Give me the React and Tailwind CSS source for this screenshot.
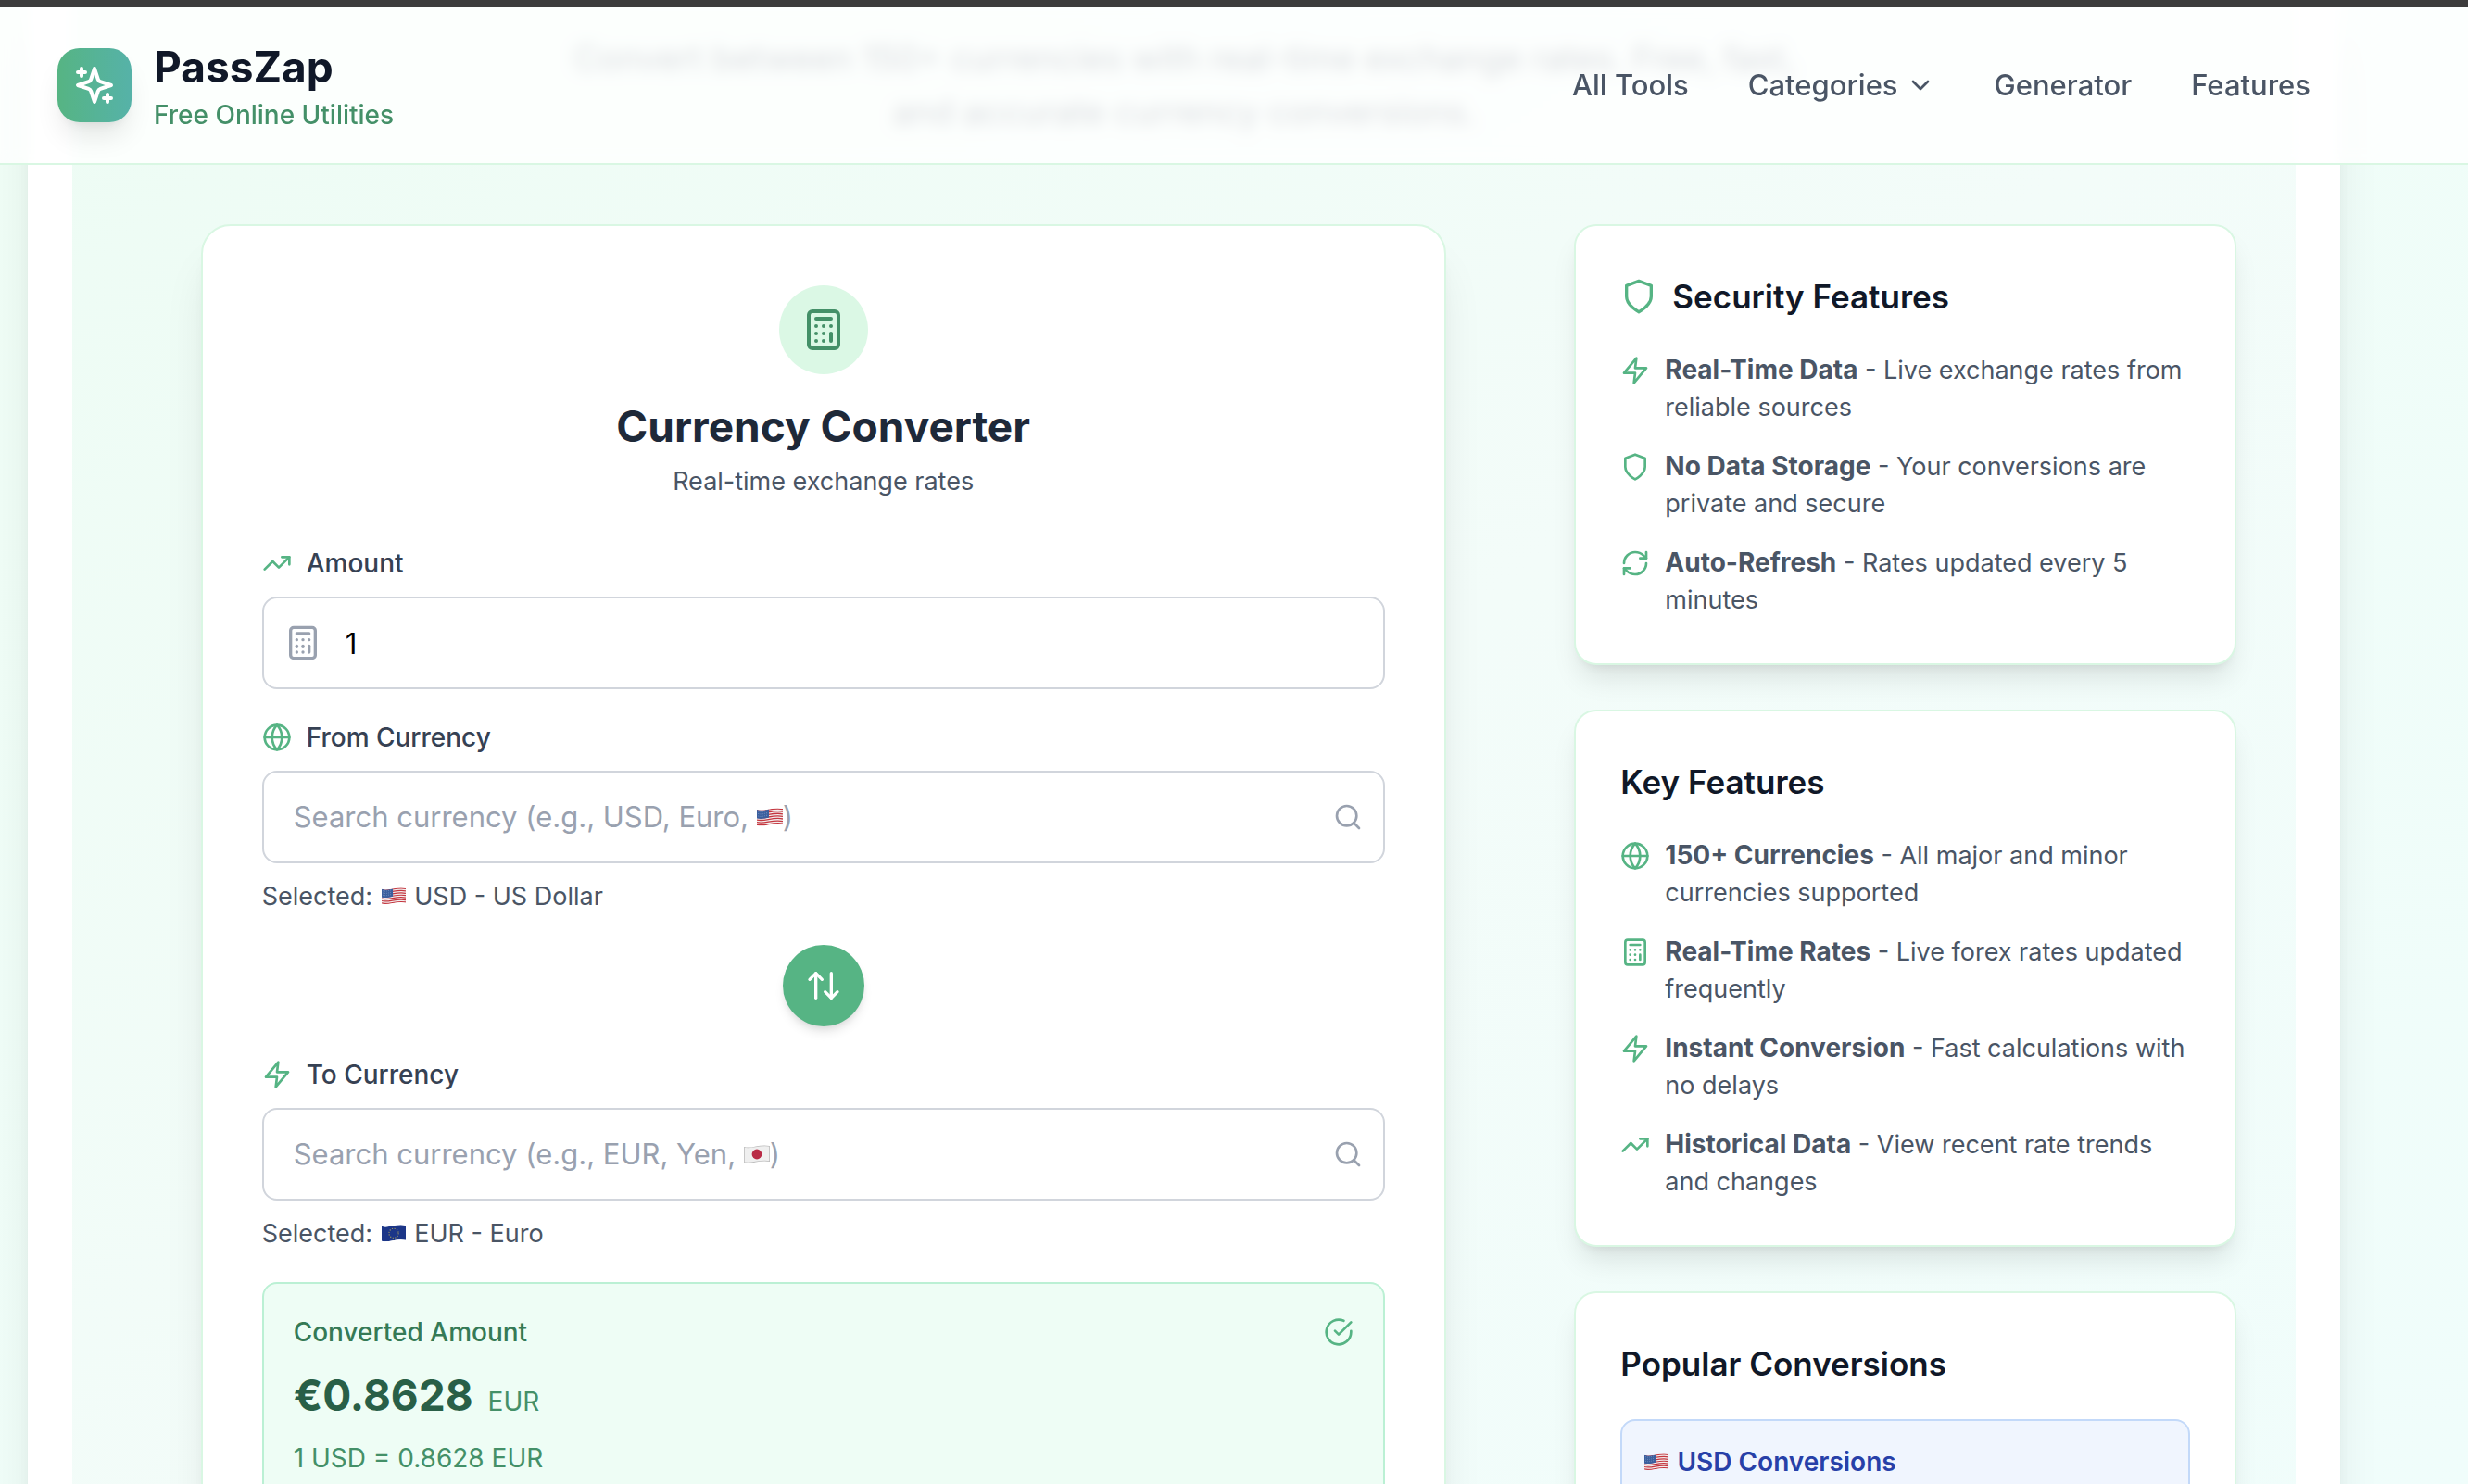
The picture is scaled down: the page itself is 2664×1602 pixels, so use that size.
import { useState } from "react";
import clsx from "clsx";

const ICONS = {
  sparkles: [
    "m12 3-1.912 5.813a2 2 0 0 1-1.275 1.275L3 12l5.813 1.912a2 2 0 0 1 1.275 1.275L12 21l1.912-5.813a2 2 0 0 1 1.275-1.275L21 12l-5.813-1.912a2 2 0 0 1-1.275-1.275L12 3Z",
    "M5 3v4",
    "M19 17v4",
    "M3 5h4",
    "M17 19h4",
  ],
  calculator: [
    "M6 2h12a2 2 0 0 1 2 2v16a2 2 0 0 1-2 2H6a2 2 0 0 1-2-2V4a2 2 0 0 1 2-2Z",
    "M8 6h8",
    "M16 14v4",
    "M16 10h.01",
    "M12 10h.01",
    "M8 10h.01",
    "M12 14h.01",
    "M8 14h.01",
    "M12 18h.01",
    "M8 18h.01",
  ],
  trending: ["M22 7 13.5 15.5 8.5 10.5 2 17", "M16 7h6v6"],
  globe: [
    "M22 12a10 10 0 1 1-20 0 10 10 0 0 1 20 0Z",
    "M12 2a14.5 14.5 0 0 0 0 20 14.5 14.5 0 0 0 0-20",
    "M2 12h20",
  ],
  zap: ["M13 2 3 14h9l-1 8 10-12h-9l1-8Z"],
  shield: ["M12 22s8-4 8-10V5l-8-3-8 3v7c0 6 8 10 8 10"],
  refresh: [
    "M3 12a9 9 0 0 1 9-9 9.75 9.75 0 0 1 6.74 2.74L21 8",
    "M21 3v5h-5",
    "M21 12a9 9 0 0 1-9 9 9.75 9.75 0 0 1-6.74-2.74L3 16",
    "M8 16H3v5",
  ],
  search: ["M19 11a8 8 0 1 1-16 0 8 8 0 0 1 16 0Z", "m21 21-4.3-4.3"],
  swap: ["m21 16-4 4-4-4", "M17 20V4", "m3 8 4-4 4 4", "M7 4v16"],
  check: ["M22 11.08V12a10 10 0 1 1-5.93-9.14", "m9 11 3 3L22 4"],
  chevron: ["m6 9 6 6 6-6"],
};

function Icon({ name, className }) {
  return (
    <svg
      viewBox="0 0 24 24"
      fill="none"
      stroke="currentColor"
      strokeWidth="2"
      strokeLinecap="round"
      strokeLinejoin="round"
      aria-hidden="true"
      className={clsx("shrink-0", className)}
    >
      {ICONS[name].map((d) => (
        <path key={d} d={d} />
      ))}
    </svg>
  );
}

const FLAG_SHAPE = "M0 2C8 4.5 17-1.5 28 1V18C17 15.5 8 21.5 0 19Z";

function Flag({ code, className }) {
  const clip = `flag-${code}`;
  return (
    <svg viewBox="0 0 28 21" aria-hidden="true" className={clsx("inline-block align-baseline", className)}>
      <defs>
        <clipPath id={clip}>
          <path d={FLAG_SHAPE} />
        </clipPath>
      </defs>
      <g clipPath={`url(#${clip})`}>
        {code === "us" && (
          <>
            <path d={FLAG_SHAPE} fill="#f3eeee" />
            {[0, 1, 2, 3, 4, 5, 6].map((i) => (
              <path
                key={i}
                d={`M0 ${2.6 + i * 2.6}c8 2.5 17-3.5 28-1`}
                fill="none"
                stroke="#c4363f"
                strokeWidth="1.3"
              />
            ))}
            <path d="M0 2C5 3.5 9 2.5 13 1.5V10.5C9 11.5 5 12.5 0 11.5Z" fill="#3b5f9e" />
            {[4, 6.5, 9].map((y) => (
              <path key={y} d={`M1.5 ${y}c3 1 6 0 10-1`} fill="none" stroke="#a9bddc" strokeWidth="0.7" strokeDasharray="0.7 1.5" />
            ))}
          </>
        )}
        {code === "jp" && (
          <>
            <path d={FLAG_SHAPE} fill="#efefef" stroke="#bdbdbd" strokeWidth="1.6" />
            <circle cx="14" cy="10" r="5.4" fill="#b92b46" />
          </>
        )}
        {code === "eu" && (
          <>
            <path d={FLAG_SHAPE} fill="#1c3688" />
            <circle cx="14" cy="10" r="5.5" fill="none" stroke="#a79c5c" strokeWidth="1.2" strokeDasharray="1.2 1.68" />
          </>
        )}
      </g>
    </svg>
  );
}

const NAV_LINK = "flex items-center gap-2 text-[31px] leading-12 font-medium text-gray-600";

function Header() {
  return (
    <header className="absolute inset-x-0 top-0 z-20 border-t-8 border-b-2 border-t-[#3c3c3c] border-b-[#d9f7e3] bg-white/80 backdrop-blur-sm">
      <div className="mr-[138px] ml-[30px] flex items-center justify-between px-8 py-8">
        <a href="#home" className="flex items-center gap-6">
          <span className="flex size-20 items-center justify-center rounded-3xl bg-linear-to-r from-[#56b483] to-[#56b2a8] text-white shadow-[0_20px_30px_-6px_rgba(0,0,0,0.1),0_8px_12px_-8px_rgba(0,0,0,0.1)]">
            <Icon name="sparkles" className="size-12" />
          </span>
          <span className="flex flex-col">
            <span className="text-[46px] leading-16 font-bold text-gray-900">PassZap</span>
            <span className="text-[28px] leading-10 font-medium text-[#449068]">Free Online Utilities</span>
          </span>
        </a>
        <nav className="flex items-center gap-16">
          <a href="#tools" className={NAV_LINK}>
            All Tools
          </a>
          <button type="button" className={NAV_LINK}>
            Categories
            <Icon name="chevron" className="size-8" />
          </button>
          <a href="#generator" className={NAV_LINK}>
            Generator
          </a>
          <a href="#features" className={NAV_LINK}>
            Features
          </a>
        </nav>
      </div>
    </header>
  );
}

function FieldLabel({ icon, htmlFor, children }) {
  return (
    <label
      htmlFor={htmlFor}
      className="mb-4 flex items-center gap-4 text-[28px] leading-10 font-medium text-gray-700"
    >
      <Icon name={icon} className="size-8 text-[#56b484]" />
      {children}
    </label>
  );
}

function CurrencyField({ id, icon, label, hint, hintFlag, flag, selected }) {
  const [query, setQuery] = useState("");

  return (
    <div>
      <FieldLabel icon={icon} htmlFor={id}>
        {label}
      </FieldLabel>
      <div className="relative">
        <input
          id={id}
          type="text"
          value={query}
          onChange={(e) => setQuery(e.target.value)}
          className="block h-[100px] w-full rounded-2xl border-2 border-gray-300 bg-white pr-20 pl-8 text-[31px] text-black outline-none"
        />
        {/* the hint carries a flag drawing, so it lies over the empty box */}
        {query === "" && (
          <span className="pointer-events-none absolute inset-y-0 left-[34px] flex items-center text-[31px] text-gray-400">
            <span>
              {hint} <Flag code={hintFlag} className="w-7" />)
            </span>
          </span>
        )}
        <Icon name="search" className="absolute top-[34px] right-6 size-8 text-gray-400" />
      </div>
      <p className="mt-4 text-[27px] leading-10 text-gray-600">
        Selected: <Flag code={flag} className="mx-0.5 w-[26px]" /> {selected}
      </p>
    </div>
  );
}

function ConverterCard() {
  const [amount, setAmount] = useState("1");

  return (
    <section className="mx-auto w-full max-w-[1344px] rounded-[32px] border-2 border-[#d9f7e3] bg-white p-16 shadow-[0_40px_50px_-10px_rgba(0,0,0,0.1),0_16px_20px_-12px_rgba(0,0,0,0.1)]">
      <div className="mb-12 flex flex-col items-center">
        <div className="mb-6 flex size-24 items-center justify-center rounded-full bg-[#dbf8e5] text-[#449068]">
          <Icon name="calculator" className="size-12" />
        </div>
        <h2 className="text-[46px] leading-16 font-bold text-gray-800">Currency Converter</h2>
        <p className="mt-2 text-[27px] leading-10 text-gray-600">Real-time exchange rates</p>
      </div>

      <div className="flex flex-col gap-8">
        <div>
          <FieldLabel icon="trending" htmlFor="amount">
            Amount
          </FieldLabel>
          <div className="relative">
            <Icon name="calculator" className="absolute top-[30px] left-6 size-10 text-gray-400" />
            <input
              id="amount"
              type="text"
              inputMode="decimal"
              value={amount}
              onChange={(e) => setAmount(e.target.value)}
              className="block h-[100px] w-full rounded-2xl border-2 border-gray-300 bg-transparent pr-8 pl-22 text-[31px] text-black outline-none"
            />
          </div>
        </div>

        <CurrencyField
          id="from-currency"
          icon="globe"
          label="From Currency"
          hint="Search currency (e.g., USD, Euro,"
          hintFlag="us"
          flag="us"
          selected="USD - US Dollar"
        />

        <button
          type="button"
          aria-label="Swap currencies"
          className="flex size-22 items-center justify-center self-center rounded-full bg-[#56b484] text-white shadow-[0_8px_12px_-2px_rgba(0,0,0,0.1),0_4px_8px_-4px_rgba(0,0,0,0.1)]"
        >
          <Icon name="swap" className="size-10" />
        </button>

        <CurrencyField
          id="to-currency"
          icon="zap"
          label="To Currency"
          hint="Search currency (e.g., EUR, Yen,"
          hintFlag="jp"
          flag="eu"
          selected="EUR - Euro"
        />

        <div className="rounded-2xl border-2 border-[#bbf0d4] bg-[#eefdf5] p-8">
          <div className="flex items-center justify-between">
            <span className="text-[28px] leading-10 font-medium text-[#357a56]">Converted Amount</span>
            <Icon name="check" className="size-8 text-[#56b484]" />
          </div>
          <div className="mt-4 flex items-baseline gap-4">
            <span className="text-[46px] leading-16 font-bold text-[#295f47]">€0.8628</span>
            <span className="text-[28px] leading-10 text-[#449068]">EUR</span>
          </div>
          <p className="mt-4 text-[28px] leading-10 text-[#449068]">1 USD = 0.8628 EUR</p>
        </div>
      </div>
    </section>
  );
}

const SECURITY_FEATURES = [
  { icon: "zap", title: "Real-Time Data", text: "Live exchange rates from reliable sources" },
  { icon: "shield", title: "No Data Storage", text: "Your conversions are private and secure" },
  { icon: "refresh", title: "Auto-Refresh", text: "Rates updated every 5 minutes" },
];

const KEY_FEATURES = [
  { icon: "globe", title: "150+ Currencies", text: "All major and minor currencies supported" },
  { icon: "calculator", title: "Real-Time Rates", text: "Live forex rates updated frequently" },
  { icon: "zap", title: "Instant Conversion", text: "Fast calculations with no delays" },
  { icon: "trending", title: "Historical Data", text: "View recent rate trends and changes" },
];

function SideCard({ icon, title, children }) {
  return (
    <section className="rounded-3xl border-2 border-[#d9f7e3] bg-white p-12 shadow-[0_20px_30px_-6px_rgba(0,0,0,0.1),0_8px_12px_-8px_rgba(0,0,0,0.1)]">
      <h3 className="mb-8 flex items-center gap-4 text-[35px] leading-14 font-semibold text-gray-900">
        {icon && <Icon name={icon} className="size-10 text-[#56b484]" />}
        {title}
      </h3>
      {children}
    </section>
  );
}

function FeatureList({ items }) {
  return (
    <ul className="flex flex-col gap-6">
      {items.map((item) => (
        <li key={item.title} className="flex items-start gap-4 text-[27px] leading-10 text-gray-600">
          <Icon name={item.icon} className="mt-1 size-8 text-[#56b484]" />
          <span>
            <strong className="text-[28px] leading-none font-bold">{item.title}</strong> - {item.text}
          </span>
        </li>
      ))}
    </ul>
  );
}

export default function App() {
  return (
    <div className="relative h-screen overflow-hidden bg-linear-to-br from-[#effdf5] to-[#f0fdfb] font-['Inter','Liberation_Sans',sans-serif]">
      <Header />

      <main className="mr-[138px] ml-[30px] bg-white px-12 shadow-[0_40px_50px_-10px_rgba(0,0,0,0.1),0_16px_20px_-12px_rgba(0,0,0,0.1)]">
        <div className="bg-linear-to-br from-[#edfcf4] via-[#f3fcf9] to-[#f0fdfb] px-16 pt-[34px] pb-16">
          <p className="mx-auto mb-[92px] max-w-[1344px] text-center text-[37px] leading-[58px] text-gray-600">
            Convert between 150+ currencies with real-time exchange rates. Free, fast, and accurate currency
            conversions.
          </p>

          <div className="grid grid-cols-3 gap-16">
            <div className="col-span-2">
              <ConverterCard />
            </div>

            <aside className="flex flex-col gap-12">
              <SideCard icon="shield" title="Security Features">
                <FeatureList items={SECURITY_FEATURES} />
              </SideCard>
              <SideCard title="Key Features">
                <FeatureList items={KEY_FEATURES} />
              </SideCard>
              <SideCard title="Popular Conversions">
                <div className="rounded-2xl border-2 border-[#c3d9f9] bg-[#f0f5fe] p-6">
                  <h4 className="text-[28px] leading-10 font-semibold text-[#2740a8]">
                    <Flag code="us" className="mr-0.5 w-[26px]" /> USD Conversions
                  </h4>
                </div>
              </SideCard>
            </aside>
          </div>
        </div>
      </main>
    </div>
  );
}
